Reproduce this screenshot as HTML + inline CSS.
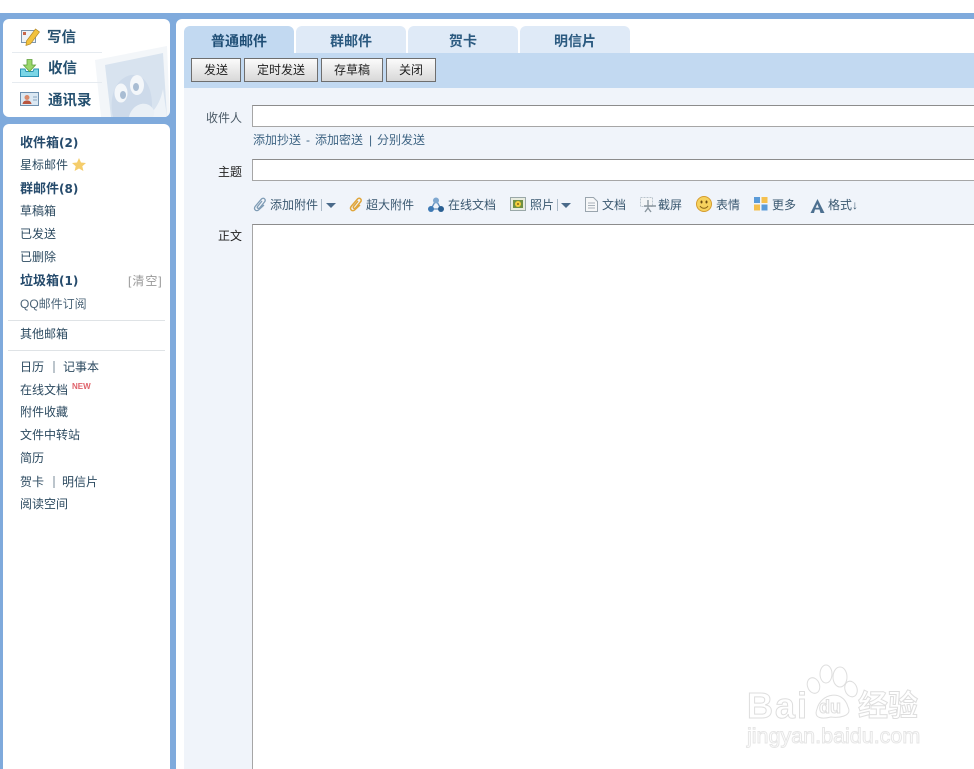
<!DOCTYPE html>
<html lang="zh"><head><meta charset="utf-8"><title>写信</title>
<style>
html,body{margin:0;padding:0;width:974px;height:769px;overflow:hidden;background:#fff}
body{position:relative;font:12px/16px "Liberation Sans","Noto Sans CJK SC",sans-serif;color:#2b4a66}
.a{position:absolute;white-space:nowrap}
.big{font-size:14.5px;font-weight:700;color:#25506f;line-height:18px}
.m{font-size:12px;color:#2c4a60;line-height:16px;left:20px}
.b{font-weight:700;font-size:13px;color:#264b6c}
.b span{font:700 12px/16px "DejaVu Sans",sans-serif}
.hr{position:absolute;height:1px;background:#dfe3e6}
.sep{position:absolute;width:2px;height:12px;background:#bcc5cc}
.tab{position:absolute;top:26px;width:110px;height:27px;border-radius:6px 6px 0 0;background:#dfeaf7;text-align:center;font-size:14px;font-weight:700;line-height:31px;color:#2b5a80}
.btn{position:absolute;top:58px;height:24px;box-sizing:border-box;border:1px solid #6e6e6e;background:linear-gradient(#fbfbfb,#d8d8d8);text-align:center;font-size:12px;line-height:22px;color:#222}
.lb{position:absolute;font-size:12px;color:#4b5a66;text-align:right;width:60px;left:182px}
.inp{position:absolute;left:252px;width:730px;box-sizing:border-box;background:#fff;border:1px solid #a6a6a6;border-top-color:#8c8c8c}
.t{position:absolute;top:197px;font-size:12px;color:#3a5870;white-space:nowrap;line-height:16px}
.l{color:#3f6584;top:132px}
svg{position:absolute;overflow:visible}
</style></head><body>
<div class="a" style="left:0;top:13px;width:974px;height:756px;background:#7faadc"></div>
<div class="a" style="left:3px;top:19px;width:167px;height:98px;background:#fff;border-radius:6px;overflow:hidden">
 <svg style="left:92px;top:30px" width="75" height="68" viewBox="0 0 75 68">
  <path d="M0 11L72 -3L75 68H6Z" fill="#f3f6f9"/>
  <path d="M10 16L68 4L72 68H16Z" fill="#d8e3ef"/>
  <path d="M52 68C62 60 66 50 68 40L72 68Z" fill="#eef3f8"/>
  <path d="M18 68C14 52 18 30 36 26C52 24 60 44 56 68Z" fill="#cddaea"/>
  <path d="M34 68C36 58 46 52 54 56C60 60 60 64 58 68Z" fill="#eaf0f6"/>
  <ellipse cx="26" cy="44" rx="6.500" ry="9.500" fill="#f4f7fa"/><ellipse cx="42" cy="36" rx="7" ry="10" fill="#f4f7fa"/>
  <ellipse cx="28" cy="46" rx="3" ry="4" fill="#a9bdd3"/><ellipse cx="41" cy="38" rx="3" ry="4" fill="#a9bdd3"/>
 </svg>
</div>
<div class="hr" style="left:12px;top:52px;width:90px;background:#e6ebf0"></div>
<div class="hr" style="left:12px;top:82px;width:90px;background:#e6ebf0"></div>
<svg style="left:21px;top:28px" width="19" height="18" viewBox="0 0 19 18"><rect x="0.500" y="2.500" width="14" height="12" fill="#eef3f8" stroke="#7d97b0"/><rect x="2" y="4" width="3" height="3" fill="#c8674c"/><path d="M5.500 13L14.500 1L18.500 4L9.500 16L5 17.500Z" fill="#f2c23e" stroke="#b48a2a" stroke-width=".7"/></svg>
<svg style="left:20px;top:59px" width="19" height="18" viewBox="0 0 19 18"><path d="M.5 10H5L6 12.500H13L14 10H18.500V17.500H.5Z" fill="#7bd6e6" stroke="#2a94b5"/><path d="M7 .5H12V6H15.500L9.500 12.500L3.500 6H7Z" fill="#9ad66b" stroke="#5d9f3a" stroke-width=".8"/></svg>
<svg style="left:20px;top:92px" width="19" height="15" viewBox="0 0 19 15"><rect x=".5" y=".5" width="18" height="13" fill="#dbe8f3" stroke="#6e8fae"/><circle cx="7" cy="5.500" r="2.500" fill="#d98a6a"/><path d="M2.500 12C3 9 5 8.500 7 8.500S11 9 11.500 12Z" fill="#b9553f"/><path d="M13 5H17M13 8H17" stroke="#8aa6c0"/></svg>
<div class="a big" style="left:47px;top:29px">写信</div>
<div class="a big" style="left:48px;top:60px">收信</div>
<div class="a big" style="left:48px;top:92px">通讯录</div>

<div class="a" style="left:3px;top:124px;width:167px;height:660px;background:#fff;border-radius:6px"></div>
<div class="a m b" style="top:135px">收件箱<span>(2)</span></div>
<div class="a m" style="top:157px">星标邮件</div>
<svg style="left:72px;top:158px" width="14" height="13" viewBox="0 0 14 13"><path d="M7 0L9 4.500L14 5L10.300 8.200L11.400 13L7 10.500L2.600 13L3.700 8.200L0 5L5 4.500Z" fill="#f5cd6b"/></svg>
<div class="a m b" style="top:181px">群邮件<span>(8)</span></div>
<div class="a m" style="top:203px">草稿箱</div>
<div class="a m" style="top:226px">已发送</div>
<div class="a m" style="top:249px">已删除</div>
<div class="a m b" style="top:273px">垃圾箱<span>(1)</span></div>
<div class="a" style="left:128px;top:273px;color:#999;letter-spacing:1px">[清空]</div>
<div class="a m" style="top:296px;color:#4b6478">QQ邮件订阅</div>
<div class="hr" style="left:8px;top:320px;width:157px"></div>
<div class="a m" style="top:326px">其他邮箱</div>
<div class="hr" style="left:8px;top:350px;width:157px"></div>
<div class="a m" style="top:359px">日历</div><div class="sep" style="left:53px;top:361px"></div><div class="a m" style="left:63px;top:359px">记事本</div>
<div class="a m" style="top:382px">在线文档</div>
<div class="a" style="left:72px;top:381px;font-size:8px;line-height:12px;font-weight:700;color:#e0636b">NEW</div>
<div class="a m" style="top:404px">附件收藏</div>
<div class="a m" style="top:427px">文件中转站</div>
<div class="a m" style="top:450px">简历</div>
<div class="a m" style="top:474px">贺卡</div><div class="sep" style="left:53px;top:476px"></div><div class="a m" style="left:62px;top:474px">明信片</div>
<div class="a m" style="top:496px">阅读空间</div>

<div class="a" style="left:176px;top:19px;width:810px;height:760px;background:#fff;border-radius:6px 0 0 0"></div>
<div class="a" style="left:184px;top:88px;width:790px;height:681px;background:#f0f4fa"></div>
<div class="a" style="left:184px;top:53px;width:790px;height:35px;background:#c2d9f1"></div>
<div class="tab" style="left:184px;background:#c2d9f1;color:#1f4e75">普通邮件</div>
<div class="tab" style="left:296px">群邮件</div>
<div class="tab" style="left:408px">贺卡</div>
<div class="tab" style="left:520px">明信片</div>
<div class="btn" style="left:191px;width:50px">发送</div>
<div class="btn" style="left:244px;width:74px">定时发送</div>
<div class="btn" style="left:321px;width:62px">存草稿</div>
<div class="btn" style="left:386px;width:50px">关闭</div>

<div class="lb" style="top:110px">收件人</div>
<div class="inp" style="top:105px;height:22px"></div>
<div class="a l" style="left:253px">添加抄送</div><div class="a l" style="left:306px">-</div><div class="a l" style="left:315px">添加密送</div><div class="a l" style="left:369px">|</div><div class="a l" style="left:377px">分别发送</div>
<div class="lb" style="top:164px;color:#222">主题</div>
<div class="inp" style="top:159px;height:22px"></div>
<div class="lb" style="top:228px;color:#222">正文</div>
<div class="inp" style="top:224px;height:560px"></div>

<svg style="left:253px;top:197px" width="14" height="15" viewBox="0 0 14 15"><path d="M9 4L4.500 9.500C3.500 11 5.500 12 6.500 11L11.500 5C13.500 2.500 10.500 0 8.500 2L2.500 9C0 12 3 15 5.500 13L11 8" fill="none" stroke="#7f9cb5" stroke-width="1.300"/></svg>
<div class="t" style="left:270px">添加附件</div>
<div class="a" style="left:321px;top:199px;width:1px;height:12px;background:#a9b8c6"></div>
<svg style="left:326px;top:203px" width="10" height="5"><path d="M0 0H10L5 5Z" fill="#4a6a8a"/></svg>
<svg style="left:349px;top:197px" width="14" height="15" viewBox="0 0 14 15"><path d="M9 4L4.500 9.500C3.500 11 5.500 12 6.500 11L11.500 5C13.500 2.500 10.500 0 8.500 2L2.500 9C0 12 3 15 5.500 13L11 8" fill="none" stroke="#e0a63c" stroke-width="1.500"/></svg>
<div class="t" style="left:366px">超大附件</div>
<svg style="left:428px;top:197px" width="16" height="15" viewBox="0 0 16 15"><path d="M8 3L3 12H13Z" fill="none" stroke="#5f8fbf" stroke-width="1.300"/><circle cx="8" cy="3.500" r="3" fill="#7fa8d0"/><circle cx="3" cy="12" r="3" fill="#3e7ab5"/><circle cx="13" cy="12" r="3" fill="#2a5f92"/></svg>
<div class="t" style="left:448px">在线文档</div>
<svg style="left:510px;top:197px" width="16" height="14" viewBox="0 0 16 14"><rect x=".5" y=".5" width="15" height="13" fill="#e8ecdf" stroke="#9aa8a8"/><rect x="3" y="3" width="10" height="8" fill="#6f9044"/><circle cx="8" cy="7" r="3" fill="#f5d03c"/><circle cx="8" cy="7" r="1" fill="#8a6414"/></svg>
<div class="t" style="left:530px">照片</div>
<div class="a" style="left:557px;top:199px;width:1px;height:12px;background:#a9b8c6"></div>
<svg style="left:561px;top:203px" width="10" height="5"><path d="M0 0H10L5 5Z" fill="#4a6a8a"/></svg>
<svg style="left:585px;top:197px" width="13" height="15" viewBox="0 0 13 15"><path d="M.5 .5H8.500L12.500 4.500V14.500H.5Z" fill="#f6f7f8" stroke="#9aa5ae"/><path d="M3 6H10M3 8.500H10M3 11H10" stroke="#a9b2ba"/></svg>
<div class="t" style="left:602px">文档</div>
<svg style="left:640px;top:197px" width="17" height="17" viewBox="0 0 17 17"><rect x=".5" y=".5" width="12" height="9" fill="#f3f5f7" stroke="#b9c3cc" stroke-dasharray="2 1"/><path d="M8 3L8 11L5 15M8 11L11 15M4 9H16" fill="none" stroke="#8b979f" stroke-width="1.400"/></svg>
<div class="t" style="left:658px">截屏</div>
<svg style="left:696px;top:196px" width="16" height="16" viewBox="0 0 16 16"><circle cx="8" cy="8" r="7.500" fill="#f6d25e" stroke="#d59c2f"/><ellipse cx="5.500" cy="6" rx="1" ry="1.500" fill="#6a4a10"/><ellipse cx="10.500" cy="6" rx="1" ry="1.500" fill="#6a4a10"/><path d="M4 10C6 13 10 13 12 10" fill="none" stroke="#8a6414"/></svg>
<div class="t" style="left:716px">表情</div>
<svg style="left:754px;top:197px" width="14" height="15"><rect width="6" height="6" fill="#5b9bd8"/><rect x="7.500" width="6" height="6" fill="#f5c04e"/><rect y="7.500" width="6" height="6" fill="#f5c04e"/><rect x="7.500" y="7.500" width="6" height="6" fill="#5b9bd8"/></svg>
<div class="t" style="left:772px">更多</div>
<svg style="left:810px;top:199px" width="15" height="14" viewBox="0 0 15 14"><path d="M7.500 0L14.500 14H10.500L9.500 10.500H5L4 14H.5ZM7.300 5L5.600 8.800H8.900Z" fill="#4d7090" fill-rule="evenodd"/></svg>
<div class="t" style="left:828px">格式↓</div>

<svg style="left:745px;top:663px" width="180" height="85" viewBox="0 0 180 85" fill="#fff" stroke="#dedede" stroke-width="1">
 <ellipse cx="68.500" cy="22.500" rx="6" ry="8" transform="rotate(-20 68.500 22.500)"/><ellipse cx="81" cy="11" rx="6" ry="9"/><ellipse cx="95" cy="14" rx="7" ry="10"/><ellipse cx="106" cy="26" rx="6" ry="8" transform="rotate(-20 106 26)"/>
 <path d="M72 46C76 30 98 26 103 44C108 54 92 55 86 54C78 56 68 56 72 46Z"/>
 <text x="2" y="55" font-family="Liberation Sans" font-size="36" font-weight="700" letter-spacing="2">Bai</text>
 <text x="74" y="50" font-family="Liberation Sans" font-size="18" font-weight="700">du</text>
 <text x="113" y="53" font-family="Noto Sans CJK SC" font-size="30" font-weight="700">经验</text>
 <text x="2" y="80" font-family="Liberation Sans" font-size="21.500" stroke="#e6e6e6">jingyan.baidu.com</text>
</svg>
</body></html>
